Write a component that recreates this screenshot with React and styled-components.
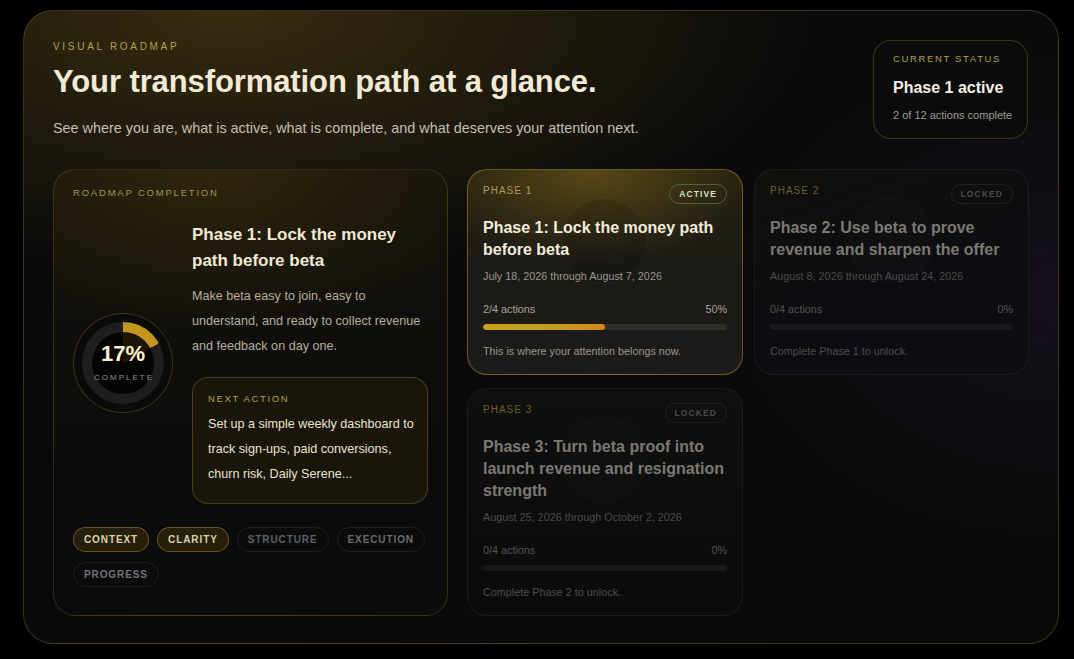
import React from 'react'
import styled, { createGlobalStyle, css } from 'styled-components'

const GlobalStyle = createGlobalStyle`
    html, body {
        margin: 0;
        padding: 0;
        background: #000;
        font-family: "Liberation Sans", Arial, sans-serif;
    }
`

const Page = styled.div`
    padding: 10px 15px 15px 23px;
`

const Panel = styled.section`
    box-sizing: border-box;
    width: 1036px;
    height: 634px;
    padding: 29px 30px 30px 29px;
    border-radius: 30px;
    border: 1px solid rgba(150, 125, 50, 0.35);
    background:
        radial-gradient(ellipse 75% 55% at 20% 0%, rgba(110, 86, 22, 0.45), transparent 75%),
        radial-gradient(ellipse 45% 55% at 100% 45%, rgba(45, 28, 65, 0.3), transparent 70%),
        #0a0a0a;
`

const Header = styled.div`
    display: flex;
    justify-content: space-between;
    align-items: flex-start;
    margin-bottom: 30px;
`

const Intro = styled.div`
    padding-top: 1px;
`

const Eyebrow = styled.div`
    font-size: ${p => p.$size || 10}px;
    line-height: 12px;
    letter-spacing: ${p => p.$spacing || 2.7}px;
    text-transform: uppercase;
    color: ${p => p.$color || '#b3a24c'};
`

const Title = styled.h1`
    margin: 11px 0 0;
    font-size: 31px;
    line-height: 36px;
    font-weight: bold;
    color: #f3ead6;
    letter-spacing: -0.1px;
`

const Subtitle = styled.p`
    margin: 18px 0 0;
    font-size: 14.4px;
    line-height: 20px;
    color: #c6bfae;
`

const StatusCard = styled.div`
    box-sizing: border-box;
    width: 155px;
    padding: 12px 10px 16px 19px;
    border-radius: 18px;
    border: 1px solid rgba(150, 125, 50, 0.35);
    background: #0b0b0b;
`

const StatusTitle = styled.div`
    margin-top: 13px;
    font-size: 16px;
    line-height: 20px;
    font-weight: bold;
    color: #f6f1e6;
`

const StatusSub = styled.div`
    margin-top: 10px;
    font-size: 11px;
    line-height: 14px;
    color: #a09a92;
`

const Grid = styled.div`
    display: grid;
    grid-template-columns: 395px 1fr;
    gap: 19px;
`

const PhaseGrid = styled.div`
    display: grid;
    grid-template-columns: 276px 275px;
    gap: 13px 11px;
    align-content: start;
`

const OverviewCard = styled.div`
    box-sizing: border-box;
    padding: 17px 19px 20px 19px;
    border-radius: 22px;
    border: 1px solid rgba(140, 120, 60, 0.3);
    background:
        radial-gradient(ellipse 90% 45% at 40% 0%, rgba(70, 55, 15, 0.55), transparent 80%),
        linear-gradient(180deg, #15120a 0%, #0b0b0b 70%);
`

const OverviewRow = styled.div`
    display: flex;
    align-items: center;
    gap: 19px;
    margin-top: 23px;
`

const RingOuter = styled.div`
    flex: none;
    width: 100px;
    height: 100px;
    box-sizing: border-box;
    border-radius: 50%;
    border: 1px solid rgba(150, 125, 50, 0.35);
    background: #0a0a0a;
    display: grid;
    place-items: center;
`

const RingTrack = styled.div`
    width: 82px;
    height: 82px;
    border-radius: 50%;
    display: grid;
    place-items: center;
`

const RingHole = styled.div`
    width: 62px;
    height: 62px;
    border-radius: 50%;
    background: rgba(0, 0, 0, 0.85);
    display: flex;
    flex-direction: column;
    align-items: center;
    justify-content: center;
`

const RingValue = styled.div`
    font-size: 22px;
    line-height: 24px;
    font-weight: bold;
    color: #fff2cf;
`

const RingLabel = styled.div`
    font-size: 8px;
    line-height: 10px;
    letter-spacing: 2px;
    color: #8891a0;
    margin: 7px 0 2px;
    padding-left: 2px;
`

const OverviewText = styled.div`
    flex: 1;
    min-width: 0;
`

const OverviewTitle = styled.h2`
    margin: 0;
    font-size: 17px;
    line-height: 26px;
    font-weight: bold;
    color: #f1e9d4;
`

const OverviewDesc = styled.p`
    margin: 10px 0 0;
    font-size: 12.6px;
    line-height: 25px;
    color: #b6ae9d;
`

const NextAction = styled.div`
    margin-top: 18px;
    padding: 15px 12px 16px 15px;
    border-radius: 16px;
    border: 1px solid rgba(150, 125, 50, 0.4);
    background: rgba(30, 25, 10, 0.75);
`

const NextText = styled.p`
    margin: 7px 0 0;
    font-size: 12.6px;
    line-height: 25px;
    color: #ebe3cf;
`

const Chips = styled.div`
    display: flex;
    flex-wrap: wrap;
    gap: 10px 8px;
    margin-top: 23px;
`

const Chip = styled.span`
    box-sizing: border-box;
    height: 25px;
    display: inline-flex;
    align-items: center;
    padding: 0 10px;
    border-radius: 13px;
    font-size: 10px;
    font-weight: bold;
    letter-spacing: 0.9px;
    ${p => p.$on ? css`
        border: 1px solid rgba(160, 130, 45, 0.55);
        background: rgba(55, 45, 14, 0.6);
        color: #dcd1a6;
    ` : css`
        border: 1px solid rgba(255, 255, 255, 0.08);
        background: transparent;
        color: ${p.$tone || '#6d7078'};
    `}
`

const PhaseCard = styled.div`
    position: relative;
    overflow: hidden;
    box-sizing: border-box;
    padding: 14px 15px 16px 15px;
    border-radius: 20px;
    ${p => p.$active ? css`
        border: 1px solid rgba(170, 140, 55, 0.55);
        background:
            radial-gradient(ellipse 60% 45% at 45% 0%, rgba(110, 88, 25, 0.7), transparent 100%),
            linear-gradient(180deg, #24200f 0%, #1b1a17 55%, #1c1b1a 100%);
    ` : css`
        border: 1px solid rgba(255, 255, 255, 0.06);
        background: ${p.$purple
            ? 'linear-gradient(160deg, #12100c 0%, #0d0c10 50%, #0f0c14 100%)'
            : 'linear-gradient(180deg, #0f0f0e 0%, #0b0b0b 100%)'};
    `}
`

const Orb = styled.div`
    position: absolute;
    top: 28px;
    left: 50%;
    width: 84px;
    height: 84px;
    margin-left: -44px;
    border-radius: 50%;
    border: 1px solid ${p => p.$active ? 'rgba(255, 255, 255, 0.04)' : 'rgba(255, 255, 255, 0.025)'};
    background: ${p => p.$active ? 'rgba(0, 0, 0, 0.12)' : 'rgba(255, 255, 255, 0.012)'};
    pointer-events: none;
`

const PhaseBody = styled.div`
    position: relative;
`

const PhaseHead = styled.div`
    display: flex;
    justify-content: space-between;
    align-items: flex-start;
`

const PhaseLabel = styled.div`
    margin-top: 1px;
    font-size: 10px;
    line-height: 12px;
    letter-spacing: 1px;
    color: ${p => p.$active ? '#b49a5c' : '#6b5e30'};
`

const Badge = styled.span`
    box-sizing: border-box;
    height: 20px;
    display: inline-flex;
    align-items: center;
    padding: 0 9px;
    border-radius: 10px;
    font-size: 8.5px;
    font-weight: bold;
    letter-spacing: 1.1px;
    ${p => p.$active ? css`
        border: 1px solid rgba(95, 140, 80, 0.6);
        color: #cfe0c2;
    ` : css`
        border: 1px solid rgba(255, 255, 255, 0.08);
        color: #4c4c4c;
    `}
`

const PhaseTitle = styled.h3`
    margin: 13px 0 0;
    font-size: 16px;
    line-height: 22px;
    font-weight: bold;
    color: ${p => p.$active ? '#f3ecdc' : '#7c7972'};
`

const PhaseDates = styled.div`
    margin-top: 8px;
    font-size: 10.8px;
    line-height: 14px;
    color: ${p => p.$active ? '#9c968b' : '#4d4b48'};
`

const ProgressMeta = styled.div`
    display: flex;
    justify-content: space-between;
    margin-top: 19px;
    font-size: 10.8px;
    line-height: 14px;
    color: ${p => p.$active ? '#aaa396' : '#55534f'};
`

const Bar = styled.div`
    margin-top: 8px;
    height: 6px;
    border-radius: 3px;
    background: ${p => p.$active ? '#2f2e2b' : '#19191b'};
    overflow: hidden;
`

const BarFill = styled.div`
    height: 100%;
    border-radius: 3px;
    background: linear-gradient(90deg, #c9a012, #c2a224 40%, #d4881a);
`

const PhaseNote = styled.div`
    margin-top: 14px;
    font-size: 10.8px;
    line-height: 14px;
    color: ${p => p.$active ? '#9d978b' : '#4f4d4a'};
`

const phases = [
    {
        label: 'PHASE 1',
        title: 'Phase 1: Lock the money path before beta',
        dates: 'July 18, 2026 through August 7, 2026',
        done: 2,
        total: 4,
        note: 'This is where your attention belongs now.',
        active: true,
    },
    {
        label: 'PHASE 2',
        title: 'Phase 2: Use beta to prove revenue and sharpen the offer',
        dates: 'August 8, 2026 through August 24, 2026',
        done: 0,
        total: 4,
        note: 'Complete Phase 1 to unlock.',
        purple: true,
    },
    {
        label: 'PHASE 3',
        title: 'Phase 3: Turn beta proof into launch revenue and resignation strength',
        dates: 'August 25, 2026 through October 2, 2026',
        done: 0,
        total: 4,
        note: 'Complete Phase 2 to unlock.',
    },
]

const chips = [
    { name: 'CONTEXT', on: true },
    { name: 'CLARITY', on: true },
    { name: 'STRUCTURE', tone: '#59616e' },
    { name: 'EXECUTION', tone: '#6e6b66' },
    { name: 'PROGRESS', tone: '#6f7279' },
]

const Phase = ({ phase }) => {
    const pct = Math.round((phase.done / phase.total) * 100)
    return (
        <PhaseCard $active={phase.active} $purple={phase.purple}>
            <Orb $active={phase.active} />
            <PhaseBody>
                <PhaseHead>
                    <PhaseLabel $active={phase.active}>{phase.label}</PhaseLabel>
                    <Badge $active={phase.active}>{phase.active ? 'ACTIVE' : 'LOCKED'}</Badge>
                </PhaseHead>
                <PhaseTitle $active={phase.active}>{phase.title}</PhaseTitle>
                <PhaseDates $active={phase.active}>{phase.dates}</PhaseDates>
                <ProgressMeta $active={phase.active}>
                    <span>{phase.done}/{phase.total} actions</span>
                    <span>{pct}%</span>
                </ProgressMeta>
                <Bar $active={phase.active}>
                    {pct > 0 && <BarFill style={{ width: pct + '%' }} />}
                </Bar>
                <PhaseNote $active={phase.active}>{phase.note}</PhaseNote>
            </PhaseBody>
        </PhaseCard>
    )
}

export default function App() {
    const completion = 17
    return (
        <Page>
            <GlobalStyle />
            <Panel>
                <Header>
                    <Intro>
                        <Eyebrow>Visual Roadmap</Eyebrow>
                        <Title>Your transformation path at a glance.</Title>
                        <Subtitle>See where you are, what is active, what is complete, and what deserves your attention next.</Subtitle>
                    </Intro>
                    <StatusCard>
                        <Eyebrow $size={9.5} $spacing={1.65}>Current Status</Eyebrow>
                        <StatusTitle>Phase 1 active</StatusTitle>
                        <StatusSub>2 of 12 actions complete</StatusSub>
                    </StatusCard>
                </Header>

                <Grid>
                    <OverviewCard>
                        <Eyebrow $size={9.5} $spacing={1.8} $color="#9e9a58">Roadmap Completion</Eyebrow>
                        <OverviewRow>
                            <RingOuter>
                                <RingTrack style={{ background: `conic-gradient(#c4951f 0 ${completion}%, #1e1e1e ${completion}% 100%)` }}>
                                    <RingHole>
                                        <RingValue>{completion}%</RingValue>
                                        <RingLabel>COMPLETE</RingLabel>
                                    </RingHole>
                                </RingTrack>
                            </RingOuter>
                            <OverviewText>
                                <OverviewTitle>Phase 1: Lock the money path before beta</OverviewTitle>
                                <OverviewDesc>Make beta easy to join, easy to understand, and ready to collect revenue and feedback on day one.</OverviewDesc>
                                <NextAction>
                                    <Eyebrow $size={9.5} $spacing={1.65}>Next Action</Eyebrow>
                                    <NextText>Set up a simple weekly dashboard to track sign-ups, paid conversions, churn risk, Daily Serene...</NextText>
                                </NextAction>
                            </OverviewText>
                        </OverviewRow>
                        <Chips>
                            {chips.map(c => (
                                <Chip key={c.name} $on={c.on} $tone={c.tone}>{c.name}</Chip>
                            ))}
                        </Chips>
                    </OverviewCard>

                    <PhaseGrid>
                        {phases.map(p => <Phase key={p.label} phase={p} />)}
                    </PhaseGrid>
                </Grid>
            </Panel>
        </Page>
    )
}
